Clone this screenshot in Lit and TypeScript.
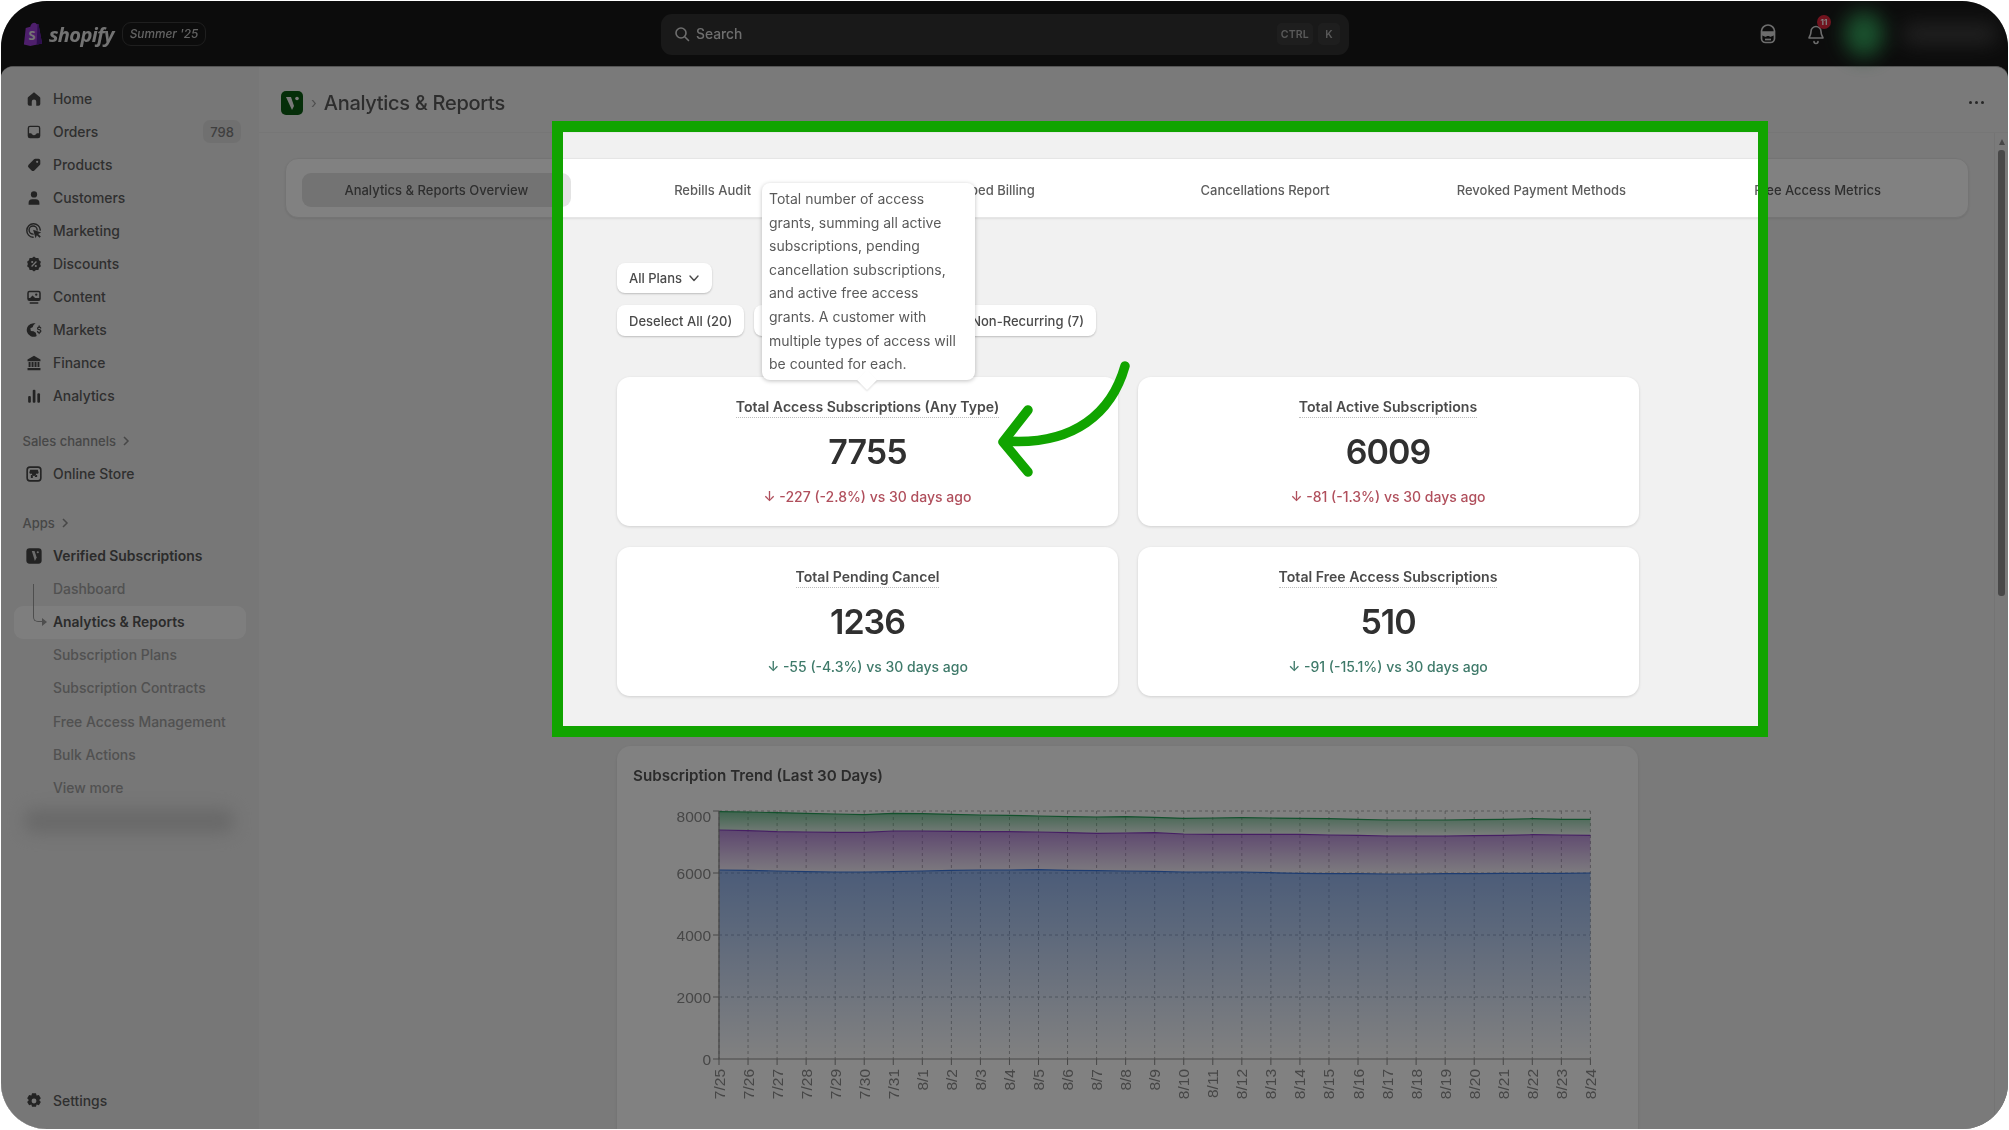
import { LitElement, html, css, svg } from "lit";
import { customElement } from "lit/decorators.js";

const ICONS: Record<string, any> = {
  home: svg`<path d="M10 2.600 3.600 7.900A2 2 0 0 0 3 9.300V15.500A2 2 0 0 0 5 17.500H7.500V13a2.500 2.500 0 0 1 5 0v4.500H15a2 2 0 0 0 2-2V9.300a2 2 0 0 0-.6-1.400Z"/>`,
  orders: svg`<path fill-rule="evenodd" d="M5.500 3h9A2.500 2.500 0 0 1 17 5.500v9a2.500 2.500 0 0 1-2.500 2.500h-9A2.500 2.500 0 0 1 3 14.500v-9A2.500 2.500 0 0 1 5.500 3Zm-1 2.500v6H7c.5 1.200 1.600 2 3 2s2.500-.8 3-2h2.500v-6a1 1 0 0 0-1-1h-9a1 1 0 0 0-1 1Z"/>`,
  products: svg`<path fill-rule="evenodd" d="M11.400 3h3.600A2 2 0 0 1 17 5v3.600a2 2 0 0 1-.6 1.400l-6 6a2.200 2.200 0 0 1-3.100 0l-3.300-3.300a2.200 2.200 0 0 1 0-3.100l6-6A2 2 0 0 1 11.400 3Zm2.100 2.300a1.200 1.200 0 1 0 0 2.400 1.200 1.200 0 0 0 0-2.400Z"/>`,
  customers: svg`<circle cx="10" cy="6" r="3.500"/><path d="M4 17.500v-2A4 4 0 0 1 8 11.500h4a4 4 0 0 1 4 4v2Z"/>`,
  marketing: svg`<path fill="none" stroke="currentColor" stroke-width="1.600" stroke-linecap="round" d="M9 17A7.500 7.500 0 1 1 17 9M9 13.500A4.500 4.500 0 1 1 13.500 9"/><path d="m9 8.500 9 3.200-3.400 1.500 3 3-1.400 1.400-3-3-1.500 3.400Z"/>`,
  discounts: svg`<path fill-rule="evenodd" d="m10 1.800 2.200 1.500 2.700-.1.700 2.600 2.100 1.700-.9 2.500.9 2.500-2.100 1.700-.7 2.600-2.700-.1L10 18.200l-2.200-1.500-2.700.1-.7-2.600-2.100-1.700.9-2.500-.9-2.500 2.100-1.700.7-2.600 2.700.1Zm2.200 5-5.400 5.400 1 1 5.400-5.400ZM8 6.600a1.200 1.200 0 1 0 0 2.400 1.200 1.200 0 0 0 0-2.400Zm4 4.400a1.200 1.200 0 1 0 0 2.400 1.200 1.200 0 0 0 0-2.400Z"/>`,
  content: svg`<path fill-rule="evenodd" d="M5 3h10a2.500 2.500 0 0 1 2.500 2.500V12a2.500 2.500 0 0 1-2.500 2.500H5A2.500 2.500 0 0 1 2.500 12V5.500A2.500 2.500 0 0 1 5 3Zm-.8 8.200h1.500l2.600-2.800 3 2.800h4.500V5.500a.8.8 0 0 0-.8-.8H5a.8.8 0 0 0-.8.8ZM12.500 6a1.300 1.300 0 1 0 0 2.600 1.300 1.300 0 0 0 0-2.600Z"/><rect x="5" y="15.800" width="10" height="1.700" rx=".8"/>`,
  markets: svg`<path d="M9.500 2.500a7.500 7.500 0 1 0 3.500 14.100l-1-3.600-2.500-1.500-3-.5-.5-3 2.500-1 1-2.500 2.300-1.900A7.500 7.500 0 0 0 9.500 2.500Z"/><path fill="none" stroke="currentColor" stroke-width="1.400" stroke-linecap="round" d="M17.500 7.800c-.4-.7-1-1-1.800-1-1 0-1.700.6-1.700 1.400 0 2 3.600 1 3.600 3 0 .9-.8 1.500-1.800 1.500-.8 0-1.500-.4-1.900-1M15.700 5.500v1.300M15.700 12.700V14"/>`,
  finance: svg`<path d="M10 2 2.800 6.200V8h14.400V6.200Z"/><path d="M4 9h2.200v5.500H4ZM7.300 9h2.200v5.500H7.300ZM10.600 9h2.200v5.500h-2.200ZM13.900 9H16v5.500h-2.100ZM2.800 15.500h14.400V18H2.800Z"/>`,
  analytics: svg`<rect x="3.500" y="10" width="3" height="7.500" rx="1.200"/><rect x="8.600" y="3" width="3" height="14.500" rx="1.200"/><rect x="13.700" y="7" width="3" height="10.500" rx="1.200"/>`,
  store: svg`<path fill-rule="evenodd" d="M5.500 1.500h9a4 4 0 0 1 4 4v9a4 4 0 0 1-4 4h-9a4 4 0 0 1-4-4v-9a4 4 0 0 1 4-4Zm0 1.800a2.200 2.200 0 0 0-2.200 2.200v9c0 1.200 1 2.200 2.200 2.200h9c1.200 0 2.200-1 2.200-2.200v-9c0-1.200-1-2.200-2.200-2.200Zm.3 2h8.400l1 3a1.700 1.700 0 0 1-2.700 1.200 2.400 2.400 0 0 1-5 0 1.700 1.700 0 0 1-2.700-1.200ZM6.500 11h2.200v3.500h-2.200Zm4.500 0h2.500v2.200H11Z"/>`,
  app: svg`<rect x="1.500" y="1.500" width="17" height="17" rx="3.500"/><path fill="#d8d8d8" d="M7.600 4.500h3l2.400 7.200-2 3.800Z"/><circle cx="14.200" cy="5.800" r="1.200" fill="#d8d8d8"/>`,
  settings: svg`<path fill-rule="evenodd" d="M7.800 1.500h4.400l.7 2.500 2.500-.7 2.200 3.700-1.800 2 .1.100 1.700 1.900-2.200 3.700-2.500-.7-.7 2.500H7.800l-.7-2.500-2.500.7-2.200-3.700 1.700-1.900.1-.1-1.800-2 2.200-3.700 2.500.7ZM10 7.300a2.700 2.700 0 1 0 0 5.400 2.700 2.700 0 0 0 0-5.400Z"/>`,
};

const NAV = [
  ["home", "Home"], ["orders", "Orders"], ["products", "Products"], ["customers", "Customers"],
  ["marketing", "Marketing"], ["discounts", "Discounts"], ["content", "Content"],
  ["markets", "Markets"], ["finance", "Finance"], ["analytics", "Analytics"],
];
const SUB = ["Dashboard", "Analytics & Reports", "Subscription Plans", "Subscription Contracts", "Free Access Management", "Bulk Actions", "View more"];
const TABS = ["Analytics & Reports Overview", "Rebills Audit", "Skipped Billing", "Cancellations Report", "Revoked Payment Methods", "Free Access Metrics"];
const CARDS = [
  { t: "Total Access Subscriptions (Any Type)", v: "7755", d: "-227 (-2.8%) vs 30 days ago", bad: true },
  { t: "Total Active Subscriptions", v: "6009", d: "-81 (-1.3%) vs 30 days ago", bad: true },
  { t: "Total Pending Cancel", v: "1236", d: "-55 (-4.3%) vs 30 days ago", bad: false },
  { t: "Total Free Access Subscriptions", v: "510", d: "-91 (-15.1%) vs 30 days ago", bad: false },
];

const DATES = [
  "7/25","7/26","7/27","7/28","7/29","7/30","7/31",
  ...Array.from({ length: 24 }, (_, i) => `8/${i + 1}`),
];
const toY = (a: number[]) => a.map((v) => 730 + v / 3);
const GREEN = toY([245,246,248,250,252,254,250,251,253,255,256,258,260,261,260,262,265,264,263,264,265,266,268,270,270,270,269,268,266,268,268]);
const PURPLE = toY([300,302,305,306,307,307,303,303,304,305,305,306,308,310,309,308,312,313,313,313,313,315,316,318,318,318,317,316,314,315,316]);
const BLUE = toY([420,421,423,425,426,426,425,423,421,420,420,419,421,422,423,424,426,426,426,428,430,431,431,432,432,431,431,430,430,430,429]);
const X0 = 719;
const DX = 871.4 / 30;
const BASE = 1059;
const px = (i: number) => X0 + i * DX;
const line = (ys: number[]) => ys.map((y, i) => `${i ? "L" : "M"}${px(i).toFixed(1)} ${y.toFixed(1)}`).join("");
const band = (top: number[], bottom: number[] | null) => {
  const back = bottom
    ? bottom.map((y, i) => [px(i), y] as const).reverse().map(([x, y]) => `L${x.toFixed(1)} ${y.toFixed(1)}`).join("")
    : `L${px(30).toFixed(1)} ${BASE}L${X0} ${BASE}`;
  return `${line(top)}${back}Z`;
};

function icon(name: string) {
  return html`<svg class="ico" viewBox="0 0 20 20" fill="currentColor">${ICONS[name]}</svg>`;
}

@customElement("app-root")
export class AppRoot extends LitElement {
  static styles = css`
    :host { display: block; width: 2009px; height: 1130px; background: #fff; font-family: Inter, "Noto Sans", sans-serif; overflow: hidden; }
    * { box-sizing: border-box; }
    .frame { position: relative; margin: 1px; width: 2007px; height: 1128px; border-radius: 46px; overflow: hidden; background: #181818; display: flex; flex-direction: column; filter: blur(0.55px); }

    .top { height: 65px; flex: none; display: grid; grid-template-columns: 638px 688px 1fr; align-items: center; padding: 1px 8px 0 22px; }
    .brand { display: flex; align-items: center; gap: 6px; }
    .bag { width: 20px; height: 26px; }
    .word { font: italic 700 20px "Open Sans", sans-serif; color: #e4e4e4; letter-spacing: -0.6px; }
    .season { margin-left: 2px; font: italic 500 11.800px Inter, sans-serif; color: #c4c4c4; border: 1px solid #3e3e3e; border-radius: 9px; height: 24px; padding: 0 7px; display: flex; align-items: center; }
    .search { height: 41px; background: #323232; border-radius: 11px; display: flex; align-items: center; gap: 5px; padding: 0 9px 0 13px; color: #dadada; font-size: 13.800px; font-weight: 500; }
    .search svg { width: 16px; height: 16px; margin-right: 1px; }
    .search span.lbl { flex: 1; }
    .kbd { height: 22px; min-width: 22px; padding: 0 4px; border-radius: 5px; background: #3d3d3d; color: #b0b0b0; font-size: 10.500px; font-weight: 600; display: flex; align-items: center; justify-content: center; letter-spacing: .2px; }
    .tools { display: flex; align-items: center; justify-content: flex-end; position: relative; height: 64px; }
    .tool { position: relative; width: 22px; height: 22px; color: #d8d8d8; margin-right: 26px; }
    .tool.bell { margin-right: 17px; }
    .tool svg { width: 100%; height: 100%; }
    .badge { position: absolute; top: -8px; right: -4px; width: 14px; height: 14px; border-radius: 50%; background: #e2263d; color: #fff; font-size: 8px; font-weight: 700; display: flex; align-items: center; justify-content: center; }
    .blob { width: 40px; height: 46px; border-radius: 50%; background: #36a25c; filter: blur(10px); margin-right: 18px; }
    .smear { width: 96px; height: 22px; border-radius: 10px; background: #444; filter: blur(10px); margin-right: 2px; }

    .body { flex: 1; min-height: 0; display: flex; border-radius: 12px 12px 0 0; background: #f1f1f1; overflow: hidden; border-top: 1px solid #a8a8a8; }

    .side { width: 258px; flex: none; background: #ebebeb; padding: 15px 13px 11px; display: flex; flex-direction: column; font-size: 13.900px; font-weight: 500; color: #5e5e5e; }
    .item { height: 33.100px; flex: none; display: flex; align-items: center; padding-left: 11px; gap: 10px; position: relative; }
    .ico { width: 18px; height: 18px; flex: none; color: #464646; }
    .count { margin-left: auto; margin-right: 5px; width: 38px; height: 23px; background: #dedede; border-radius: 7px; font-size: 13px; color: #7d7d7d; display: flex; align-items: center; justify-content: center; }
    .sect { height: 33px; flex: none; display: flex; align-items: center; gap: 6px; padding-left: 8.500px; color: #8c8c8c; font-size: 13px; }
    .sect svg { width: 8px; height: 10px; }
    .mt1 { margin-top: 11.500px; }
    .mt2 { margin-top: 16px; }
    .sub { padding-left: 39px; color: #a0a0a0; }
    .sub.on { color: #565656; font-weight: 600; background: #fafafa; border-radius: 9px; }
    .app-name { font-weight: 600; color: #565656; }
    .conn { position: absolute; left: 19px; top: -22px; width: 10px; height: 38px; border-left: 1.500px solid #9a9a9a; border-bottom: 1.500px solid #9a9a9a; border-bottom-left-radius: 5px; }
    .conn2 { position: absolute; left: 28px; top: 12px; border-left: 5px solid #9a9a9a; border-top: 4px solid transparent; border-bottom: 4px solid transparent; }
    .smudge { height: 24px; flex: none; margin: 5px 12px 4px 10px; background: #cfcfcf; border-radius: 10px; filter: blur(8px); }
    .spacer { flex: 1; }

    .main { flex: 1; min-width: 0; display: flex; flex-direction: column; }
    .head { height: 66px; flex: none; display: flex; align-items: center; padding: 6px 24px 0 22px; border-bottom: 1px solid #e9e9e9; }
    .logo { width: 22px; height: 24px; border-radius: 5px; background: #0b5c12; display: flex; align-items: center; justify-content: center; }
    .logo svg { width: 22px; height: 24px; }
    .crumb { margin: 0 7px 0 8px; color: #9c9c9c; font-size: 15px; }
    h1 { margin: 0; font-size: 20px; font-weight: 500; color: #5a5a5a; flex: 1; letter-spacing: -0.300px; }
    .dots { display: flex; gap: 3px; }
    .dots i { width: 3px; height: 3px; border-radius: 50%; background: #4c4c4c; display: block; }

    .scroll { flex: 1; min-height: 0; display: flex; }
    .page { flex: 1; min-width: 0; padding: 25px 25px 0 26px; overflow: hidden; }
    .bar { width: 14px; flex: none; border-left: 1px solid #e6e6e6; padding: 6px 3px 0 3px; }
    .bar .up { width: 0; height: 0; border: 3.500px solid transparent; border-bottom: 6px solid #8c8c8c; border-top: 0; margin: 0 auto 5px; }
    .bar .thumb { width: 7px; height: 446px; border-radius: 3px; background: #8e8e8e; }

    .tabs { display: grid; grid-template-columns: repeat(6, 1fr); gap: 7.500px; padding: 14px 16px 10px; background: #fff; border: 1px solid #e6e6e6; border-radius: 13px; height: 60px; margin-bottom: 45px; box-shadow: 0 1px 2px rgba(0,0,0,.08); }
    .tab { display: flex; align-items: center; justify-content: center; font-size: 13px; font-weight: 500; color: #5c5c5c; border-radius: 9px; }
    .tab.on { background: #e3e3e3; }

    .content { width: 1021px; margin-left: 332px; }
    .row { display: flex; gap: 10px; margin-bottom: 12px; }
    .btn { height: 30px; background: #fff; border-radius: 8px; box-shadow: 0 1px 2px rgba(0,0,0,.22); display: flex; align-items: center; justify-content: center; gap: 6px; padding: 0 12px; font-size: 13px; font-weight: 500; color: #4a4a4a; white-space: nowrap; }
    .btn svg { width: 12px; height: 12px; }
    .btn.under-tip { width: 195px; }
    .btn.tall { height: 31px; }
    .cards { display: grid; grid-template-columns: 501px 501px; gap: 21px 19.500px; margin-top: 41px; }
    .card { height: 149px; background: #fff; border-radius: 13px; box-shadow: 0 1px 3px rgba(0,0,0,.14); padding: 20px 0 0; display: flex; flex-direction: column; align-items: center; }
    .ct { font-size: 14.100px; font-weight: 600; color: #4a4a4a; line-height: 20px; border-bottom: 1px dotted #bdbdbd; }
    .cv { font-size: 34px; font-weight: 600; color: #303030; line-height: 44px; margin-top: 11.500px; letter-spacing: -1px; }
    .cd { font-size: 14px; font-weight: 500; line-height: 20px; margin-top: 13.500px; }
    .cd.bad { color: #b04f5c; }
    .cd.good { color: #3f7a6a; }

    .chart { margin-top: 50px; background: #fff; border-radius: 14px 14px 0 0; padding: 20px 0 0; height: 420px; box-shadow: 0 1px 3px rgba(0,0,0,.1); }
    .chart h2 { margin: 0 0 4px 16px; font-size: 15.200px; line-height: 20px; font-weight: 600; color: #565656; }
    .chart svg { display: block; width: 1021px; height: 340px; }
    .chart text { font-family: "Liberation Sans", sans-serif; font-size: 15.500px; fill: #8c8c8c; }

    .spot { position: absolute; left: 551px; top: 120px; width: 1216px; height: 616px; border: solid #11a400; border-width: 11px 10px 11px 11px; box-shadow: 0 0 0 3000px rgba(0,0,0,.495); z-index: 3; pointer-events: none; }
    .tip { position: absolute; left: 761px; top: 182px; width: 213px; padding: 4px 7px 4px 7px; background: #fff; border-radius: 8px; box-shadow: 0 1px 4px rgba(0,0,0,.25); font-size: 14px; line-height: 23.600px; color: #5a5a5a; z-index: 4; }
    .tip::after { content: ""; position: absolute; left: 98px; bottom: -7px; width: 14px; height: 14px; background: #fff; transform: rotate(45deg); box-shadow: 1px 1px 2px rgba(0,0,0,.12); }
    .tip span { position: relative; z-index: 1; }
    .arrow { position: absolute; left: 0; top: 0; width: 2007px; height: 1128px; z-index: 4; pointer-events: none; }
  `;

  private chart() {
    const ticks = [0, 2000, 4000, 6000, 8000];
    const yOf = (v: number) => BASE - (v / 2000) * 62;
    return html`<svg viewBox="617 790 1021 340">
      <defs>
        <linearGradient id="gb" x1="0" y1="0" x2="0" y2="1"><stop offset="0" stop-color="#3b78e0" stop-opacity=".54"/><stop offset="1" stop-color="#3b78e0" stop-opacity="0"/></linearGradient>
        <linearGradient id="gp" x1="0" y1="0" x2="0" y2="1"><stop offset="0" stop-color="#8a3fc4" stop-opacity=".6"/><stop offset="1" stop-color="#8a3fc4" stop-opacity=".05"/></linearGradient>
        <linearGradient id="gg" x1="0" y1="0" x2="0" y2="1"><stop offset="0" stop-color="#27a05a" stop-opacity=".6"/><stop offset="1" stop-color="#27a05a" stop-opacity=".05"/></linearGradient>
      </defs>
      ${DATES.map((_, i) => svg`<line x1=${px(i)} x2=${px(i)} y1=${yOf(8000)} y2=${BASE} stroke="#b0b0b0" stroke-dasharray="3 3"/>`)}
      ${ticks.slice(1).map((t) => svg`<line x1=${X0} x2=${px(30)} y1=${yOf(t)} y2=${yOf(t)} stroke="#b0b0b0" stroke-dasharray="3 3"/>`)}
      <path d=${band(BLUE, null)} fill="url(#gb)"/>
      <path d=${band(PURPLE, BLUE)} fill="url(#gp)"/>
      <path d=${band(GREEN, PURPLE)} fill="url(#gg)"/>
      <path d=${line(BLUE)} fill="none" stroke="#3b78e0" stroke-width="1.200"/>
      <path d=${line(PURPLE)} fill="none" stroke="#8a3fc4" stroke-width="1.200"/>
      <path d=${line(GREEN)} fill="none" stroke="#27a05a" stroke-width="1.200"/>
      <path d="M${X0} ${yOf(8000)}V${BASE}H${px(30)}" fill="none" stroke="#8c8c8c" stroke-width="1.200"/>
      ${ticks.map((t) => svg`<line x1=${X0 - 6} x2=${X0} y1=${yOf(t)} y2=${yOf(t)} stroke="#8c8c8c"/>
        <text x=${X0 - 8} y=${yOf(t) + (t === 8000 ? 11 : 5.500)} text-anchor="end">${t}</text>`)}
      ${DATES.map((d, i) => svg`<line x1=${px(i)} x2=${px(i)} y1=${BASE} y2=${BASE + 6} stroke="#8c8c8c"/>
        <text transform="translate(${px(i) + 5.500} ${BASE + 10}) rotate(-90)" text-anchor="end">${d}</text>`)}
    </svg>`;
  }

  render() {
    return html`<div class="frame">
      <header class="top">
        <div class="brand">
          <svg class="bag" viewBox="0 0 22 27">
            <path fill="#9a3fd6" d="M3 7 8 5.500C8.500 2.500 10.500 1 12.500 1c1.500 0 2.200 1 2.600 1.800l1.900-.3L21 24l-13 2.800L1 25Z"/>
            <path fill="#5c1f9c" d="m17 2.500 4 21.500-6 1.300 1-22.500Z"/>
            <text x="6" y="20" font-family="Open Sans, sans-serif" font-weight="700" font-size="14" fill="#e8e8e8">S</text>
          </svg>
          <span class="word">shopify</span>
          <span class="season">Summer '25</span>
        </div>
        <div class="search">
          <svg viewBox="0 0 16 16" fill="none" stroke="currentColor" stroke-width="1.600" stroke-linecap="round"><circle cx="7" cy="7" r="5"/><path d="m11 11 3.500 3.500"/></svg>
          <span class="lbl">Search</span>
          <span class="kbd">CTRL</span><span class="kbd">K</span>
        </div>
        <div class="tools">
          <div class="tool">
            <svg viewBox="0 0 22 22" fill="none" stroke="currentColor" stroke-width="1.700" stroke-linejoin="round"><path d="M4.500 8a6.500 6 0 0 1 13 0v7.500a4 4 0 0 1-4 4h-5a4 4 0 0 1-4-4Z"/><path fill="currentColor" d="M5 9h12v2.500l-3.500 1.500L11 11.500 8.500 13 5 11.500Z"/><path d="M8 16.500h6"/></svg>
          </div>
          <div class="tool bell">
            <svg viewBox="0 0 22 22" fill="none" stroke="currentColor" stroke-width="1.600" stroke-linecap="round" stroke-linejoin="round"><path d="M11 3.500a5 5 0 0 0-5 5c0 4-2 5.500-2 6.500h14c0-1-2-2.500-2-6.500a5 5 0 0 0-5-5Z"/><path d="M9 18.500a2 2 0 0 0 4 0"/></svg>
            <span class="badge">11</span>
          </div>
          <div class="blob"></div>
          <div class="smear"></div>
        </div>
      </header>

      <div class="body">
        <nav class="side">
          ${NAV.map(([k, l]) => html`<div class="item">${icon(k)}<span>${l}</span>${k === "orders" ? html`<span class="count">798</span>` : ""}</div>`)}
          <div class="sect mt1">Sales channels <svg viewBox="0 0 8 10" fill="none" stroke="currentColor" stroke-width="1.500"><path d="m2 1 4 4-4 4"/></svg></div>
          <div class="item">${icon("store")}<span>Online Store</span></div>
          <div class="sect mt2">Apps <svg viewBox="0 0 8 10" fill="none" stroke="currentColor" stroke-width="1.500"><path d="m2 1 4 4-4 4"/></svg></div>
          <div class="item">${icon("app")}<span class="app-name">Verified Subscriptions</span></div>
          ${SUB.map((s, i) => html`<div class="item sub ${i === 1 ? "on" : ""}">${i === 1 ? html`<i class="conn"></i><i class="conn2"></i>` : ""}<span>${s}</span></div>`)}
          <div class="smudge"></div>
          <div class="spacer"></div>
          <div class="item">${icon("settings")}<span>Settings</span></div>
        </nav>

        <div class="main">
          <div class="head">
            <div class="logo"><svg viewBox="0 0 22 24"><path fill="#f2f2f2" d="M5 6h5l3 9-2 4Z"/><circle cx="16" cy="7.500" r="1.800" fill="#f2f2f2"/></svg></div>
            <span class="crumb">›</span>
            <h1>Analytics &amp; Reports</h1>
            <div class="dots"><i></i><i></i><i></i></div>
          </div>
          <div class="scroll">
            <div class="page">
              <div class="tabs">${TABS.map((t, i) => html`<div class="tab ${i === 0 ? "on" : ""}">${t}</div>`)}</div>
              <div class="content">
                <div class="row"><div class="btn">All Plans <svg viewBox="0 0 12 12" fill="none" stroke="currentColor" stroke-width="1.400" stroke-linecap="round" stroke-linejoin="round"><path d="m2 4 4 4.500L10 4"/></svg></div></div>
                <div class="row">
                  <div class="btn tall">Deselect All (20)</div>
                  <div class="btn tall under-tip"></div>
                  <div class="btn tall">Non-Recurring (7)</div>
                </div>
                <div class="cards">
                  ${CARDS.map((c) => html`<div class="card">
                    <div class="ct">${c.t}</div>
                    <div class="cv">${c.v}</div>
                    <div class="cd ${c.bad ? "bad" : "good"}">↓ ${c.d}</div>
                  </div>`)}
                </div>
                <section class="chart">
                  <h2>Subscription Trend (Last 30 Days)</h2>
                  ${this.chart()}
                </section>
              </div>
            </div>
            <div class="bar"><div class="up"></div><div class="thumb"></div></div>
          </div>
        </div>
      </div>

      <div class="spot"></div>
      <div class="tip"><span>Total number of access grants, summing all active subscriptions, pending cancellation subscriptions, and active free access grants. A customer with multiple types of access will be counted for each.</span></div>
      <svg class="arrow" viewBox="1 1 2007 1128" fill="none" stroke="#11a400" stroke-width="9.500" stroke-linecap="round" stroke-linejoin="round">
        <path d="M1125 366C1112 412 1075 446 1005 441"/>
        <path d="M1028 410 1003 442 1028 472"/>
      </svg>
    </div>`;
  }
}
